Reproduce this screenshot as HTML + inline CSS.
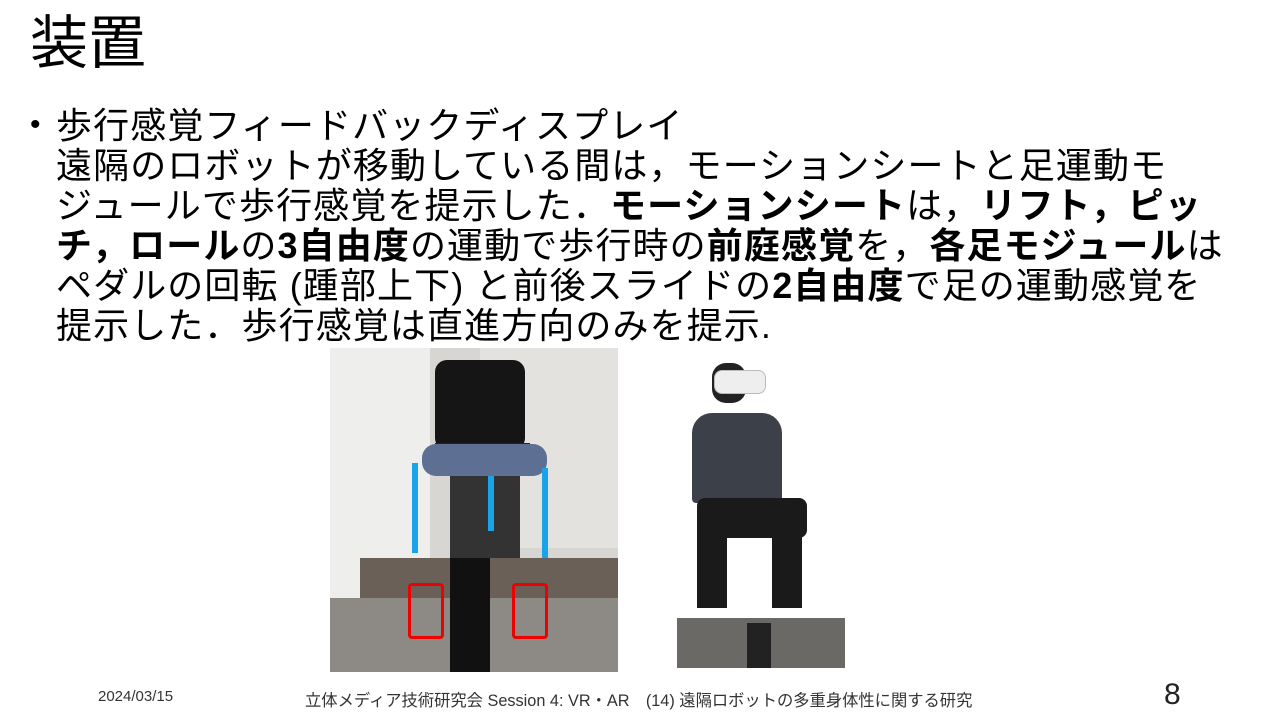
<!DOCTYPE html>
<html><head><meta charset="utf-8"><style>
body{margin:0;width:1280px;height:720px;background:#fff;position:relative;overflow:hidden;font-family:"Liberation Sans","Noto Sans CJK JP",sans-serif;color:#000}
.t{position:absolute;white-space:nowrap}
.l{position:absolute;left:56px;font-size:36px;line-height:40px;white-space:nowrap;letter-spacing:1.1px}
b{font-weight:bold}
</style></head><body>
<div class="t" style="left:30px;top:10px;font-size:58px;line-height:68px">装置</div>
<div class="t" style="left:30px;top:108px;font-size:30px">•</div>
<div class="l" style="top:106px">歩行感覚フィードバックディスプレイ</div>
<div class="l" style="top:146px">遠隔のロボットが移動している間は，モーションシートと足運動モ</div>
<div class="l" style="top:186px">ジュールで歩行感覚を提示した．<b>モーションシート</b>は，<b>リフト，ピッ</b></div>
<div class="l" style="top:226px"><b>チ，ロール</b>の<b>3自由度</b>の運動で歩行時の<b>前庭感覚</b>を，<b>各足モジュール</b>は</div>
<div class="l" style="top:266px">ペダルの回転 (踵部上下) と前後スライドの<b>2自由度</b>で足の運動感覚を</div>
<div class="l" style="top:306px">提示した．歩行感覚は直進方向のみを提示.</div>

<div style="position:absolute;left:330px;top:348px;width:288px;height:324px;background:#d8d6d2;overflow:hidden">
 <div style="position:absolute;left:0;top:0;width:100px;height:324px;background:#eeeeec"></div>
 <div style="position:absolute;left:150px;top:0;width:138px;height:200px;background:#e4e2de"></div>
 <div style="position:absolute;left:105px;top:12px;width:90px;height:90px;background:#151515;border-radius:12px"></div>
 <div style="position:absolute;left:105px;top:95px;width:95px;height:30px;background:#222"></div>
 <div style="position:absolute;left:92px;top:96px;width:125px;height:32px;background:#5d6f93;border-radius:14px"></div>
 <div style="position:absolute;left:120px;top:128px;width:70px;height:90px;background:#333"></div>
 <div style="position:absolute;left:30px;top:210px;width:258px;height:60px;background:#6a6058"></div>
 <div style="position:absolute;left:0;top:250px;width:288px;height:74px;background:#8d8a86"></div>
 <div style="position:absolute;left:120px;top:210px;width:40px;height:114px;background:#111"></div>
 <div style="position:absolute;left:82px;top:115px;width:6px;height:90px;background:#1aa3e8"></div>
 <div style="position:absolute;left:212px;top:120px;width:6px;height:90px;background:#1aa3e8"></div>
 <div style="position:absolute;left:158px;top:128px;width:6px;height:55px;background:#1aa3e8"></div>
 <div style="position:absolute;left:78px;top:235px;width:30px;height:50px;border:3px solid #e00;border-radius:4px"></div>
 <div style="position:absolute;left:182px;top:235px;width:30px;height:50px;border:3px solid #e00;border-radius:4px"></div>
</div>

<div style="position:absolute;left:672px;top:358px;width:173px;height:310px">
 <div style="position:absolute;left:40px;top:5px;width:34px;height:40px;background:#222;border-radius:14px"></div>
 <div style="position:absolute;left:42px;top:12px;width:50px;height:22px;background:#eee;border-radius:8px;border:1px solid #bbb"></div>
 <div style="position:absolute;left:20px;top:55px;width:90px;height:90px;background:#3c4048;border-radius:20px 20px 4px 4px"></div>
 <div style="position:absolute;left:25px;top:140px;width:110px;height:40px;background:#1a1a1a;border-radius:8px"></div>
 <div style="position:absolute;left:25px;top:170px;width:30px;height:80px;background:#1a1a1a"></div>
 <div style="position:absolute;left:100px;top:170px;width:30px;height:80px;background:#1a1a1a"></div>
 <div style="position:absolute;left:5px;top:260px;width:168px;height:50px;background:#6b6965"></div>
 <div style="position:absolute;left:75px;top:265px;width:24px;height:45px;background:#222"></div>
</div>

<div class="t" style="left:98px;top:688px;font-size:15px;color:#333">2024/03/15</div>
<div class="t" style="left:305px;top:687px;font-size:16.3px;color:#333">立体メディア技術研究会 Session 4: VR・AR　(14) 遠隔ロボットの多重身体性に関する研究</div>
<div class="t" style="left:1164px;top:678px;font-size:30px;color:#222">8</div>
</body></html>
